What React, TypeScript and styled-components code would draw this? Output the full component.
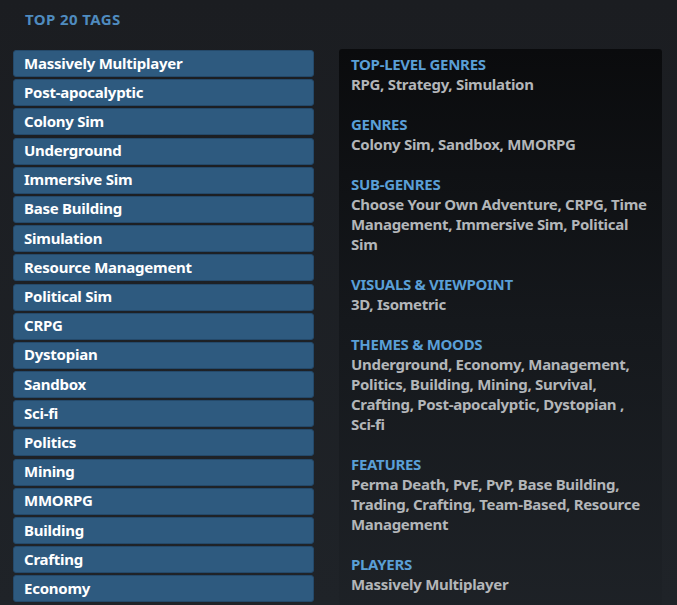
import styled, { createGlobalStyle } from "styled-components";

const GlobalStyle = createGlobalStyle`
  body {
    margin: 0;
    background: #1d2025;
    font-family: "Noto Sans", "Liberation Sans", sans-serif;
  }
`;

const Page = styled.div`
  width: 677px;
  height: 605px;
  overflow: hidden;
  background: linear-gradient(180deg, #1b1d21 0%, #1f2328 100%);
`;

const Title = styled.h2`
  margin: 0;
  padding: 9px 0 0 25px;
  height: 40px;
  box-sizing: border-box;
  font-size: 15px;
  font-weight: 700;
  color: #4f8bbf;
  letter-spacing: 0.4px;
`;

const Columns = styled.div`
  display: grid;
  grid-template-columns: 301px 323px;
  column-gap: 25px;
  padding-left: 13px;
  align-items: start;
`;

const TagList = styled.div`
  display: flex;
  flex-direction: column;
  gap: 2.2px;
  padding-top: 10px;
`;

const Tag = styled.div`
  height: 27px;
  box-sizing: border-box;
  padding: 0 10px 2px;
  display: flex;
  align-items: center;
  background: #2e5a7f;
  border: 1px solid #24496a;
  border-radius: 3px;
  color: #ffffff;
  font-size: 15px;
  font-weight: 700;
  letter-spacing: -0.25px;
  line-height: 18px;
`;

const Panel = styled.div`
  margin-top: 9px;
  min-height: 600px;
  padding: 5px 12px 0;
  border-radius: 3px;
  background: linear-gradient(180deg, #0a0b0d 0%, #15181c 45%, #1f2328 100%);
`;

const Section = styled.div`
  margin-bottom: 20px;
  font-size: 15px;
  line-height: 20px;
  font-weight: 700;
  letter-spacing: -0.3px;
`;

const SectionHead = styled.div`
  color: #5a9fd6;
`;

const SectionBody = styled.div`
  color: #b3b6b9;
`;

const tags = [
  "Massively Multiplayer",
  "Post-apocalyptic",
  "Colony Sim",
  "Underground",
  "Immersive Sim",
  "Base Building",
  "Simulation",
  "Resource Management",
  "Political Sim",
  "CRPG",
  "Dystopian",
  "Sandbox",
  "Sci-fi",
  "Politics",
  "Mining",
  "MMORPG",
  "Building",
  "Crafting",
  "Economy",
];

const sections = [
  { head: "TOP-LEVEL GENRES", body: "RPG, Strategy, Simulation" },
  { head: "GENRES", body: "Colony Sim, Sandbox, MMORPG" },
  {
    head: "SUB-GENRES",
    body: "Choose Your Own Adventure, CRPG, Time Management, Immersive Sim, Political Sim",
  },
  { head: "VISUALS & VIEWPOINT", body: "3D, Isometric" },
  {
    head: "THEMES & MOODS",
    body: "Underground, Economy, Management, Politics, Building, Mining, Survival, Crafting, Post-apocalyptic, Dystopian , Sci-fi",
  },
  {
    head: "FEATURES",
    body: "Perma Death, PvE, PvP, Base Building, Trading, Crafting, Team-Based, Resource Management",
  },
  { head: "PLAYERS", body: "Massively Multiplayer" },
];

const App = () => {
  return (
    <>
      <GlobalStyle />
      <Page>
        <Title>TOP 20 TAGS</Title>
        <Columns>
          <TagList>
            {tags.map((t) => (
              <Tag key={t}>{t}</Tag>
            ))}
          </TagList>
          <Panel>
            {sections.map((s) => (
              <Section key={s.head}>
                <SectionHead>{s.head}</SectionHead>
                <SectionBody>{s.body}</SectionBody>
              </Section>
            ))}
          </Panel>
        </Columns>
      </Page>
    </>
  );
};

export default App;
